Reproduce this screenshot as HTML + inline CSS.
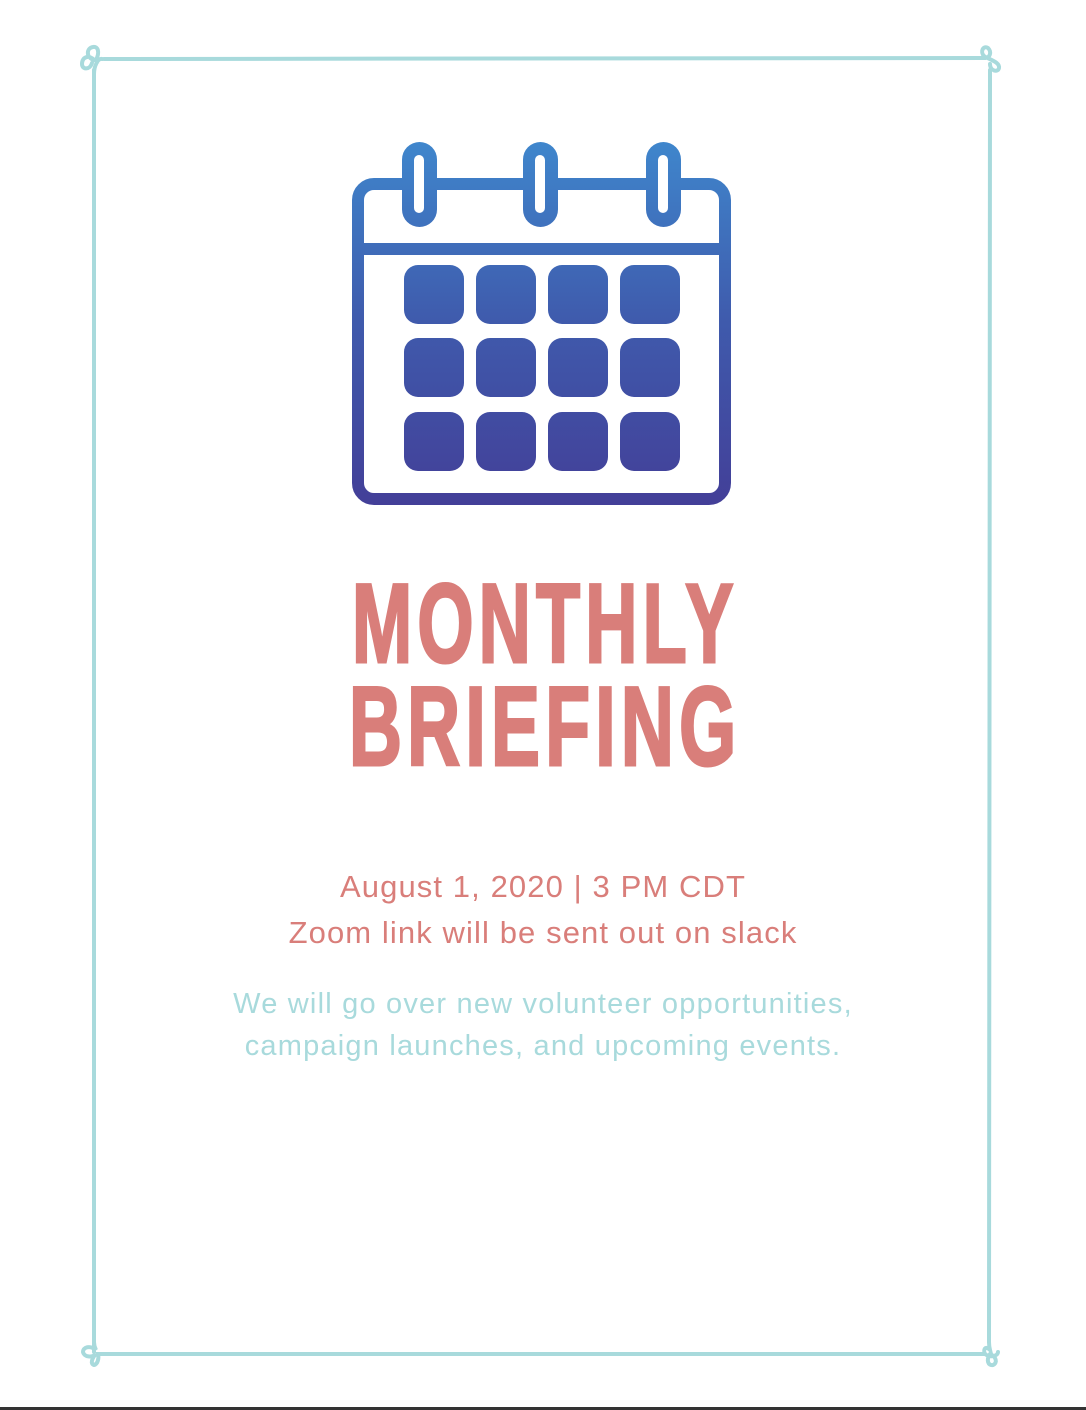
<!DOCTYPE html>
<html><head><meta charset="utf-8"><style>
html,body{margin:0;padding:0;background:#fff;}
body{width:1086px;height:1410px;position:relative;overflow:hidden;font-family:"Liberation Sans",sans-serif;}
.t{position:absolute;left:0;width:1086px;text-align:center;white-space:nowrap;}
.h{font-weight:bold;color:#d97e7a;font-size:112px;line-height:1;-webkit-text-stroke:3px #d97e7a;letter-spacing:8px;}
.h span{display:inline-block;padding-left:8px;}
</style></head><body>
<svg width="1086" height="1410" style="position:absolute;left:0;top:0">
<defs><linearGradient id="g" gradientUnits="userSpaceOnUse" x1="0" y1="142" x2="0" y2="505">
<stop offset="0" stop-color="#3f86cc"/><stop offset="0.5" stop-color="#3f5aac"/><stop offset="1" stop-color="#433f98"/></linearGradient></defs>
<g fill="none" stroke="#a8dadc" stroke-width="4" stroke-linecap="round">
<path d="M94 1352 L94 70 M104 59 L985 58 M990 70 L989 1342 M985 1354 L100 1354"/>
<path d="M94 74 C94 66 98 58 102 59 M96 60 C100 52 98 46 93 47 C86 48 86 58 94 60 C90 55 82 56 82 64 C82 70 90 70 92 63"/>
<path d="M985 58 C990 58 992 52 988 48 C983 45 980 52 984 56 C990 60 1000 62 999 68 C998 73 990 71 990 64"/>
<path d="M94 1342 C94 1346 96 1350 96 1350 C90 1345 83 1347 83 1352 C84 1357 92 1358 96 1354 C92 1358 90 1364 94 1365 C98 1364 99 1358 98 1354 L104 1354"/>
<path d="M989 1342 C989 1346 990 1350 990 1350 C985 1345 983 1350 985 1354 C990 1358 998 1356 998 1352 M990 1354 C986 1360 988 1366 993 1365 C998 1363 996 1356 990 1354"/>
</g>
<g fill="url(#g)">
<rect x="358" y="184" width="367" height="315" rx="16" fill="none" stroke="url(#g)" stroke-width="12"/>
<rect x="358" y="243" width="367" height="12"/>
<rect x="402" y="142" width="35" height="85" rx="17.5"/>
<rect x="523" y="142" width="35" height="85" rx="17.5"/>
<rect x="646" y="142" width="35" height="85" rx="17.5"/>
<rect x="404" y="265" width="60" height="59" rx="14"/><rect x="476" y="265" width="60" height="59" rx="14"/><rect x="548" y="265" width="60" height="59" rx="14"/><rect x="620" y="265" width="60" height="59" rx="14"/>
<rect x="404" y="338" width="60" height="59" rx="14"/><rect x="476" y="338" width="60" height="59" rx="14"/><rect x="548" y="338" width="60" height="59" rx="14"/><rect x="620" y="338" width="60" height="59" rx="14"/>
<rect x="404" y="412" width="60" height="59" rx="14"/><rect x="476" y="412" width="60" height="59" rx="14"/><rect x="548" y="412" width="60" height="59" rx="14"/><rect x="620" y="412" width="60" height="59" rx="14"/>
</g>
<g fill="#fff"><rect x="414" y="155" width="10" height="58" rx="5"/><rect x="535" y="155" width="10" height="58" rx="5"/><rect x="658" y="155" width="10" height="58" rx="5"/></g>
<rect x="0" y="1407" width="1086" height="3" fill="#333"/>
</svg>
<div class="t h" style="top:568px"><span style="transform:scaleX(0.645)">MONTHLY</span></div>
<div class="t h" style="top:671px"><span style="transform:scaleX(0.655)">BRIEFING</span></div>
<div class="t" style="top:864px;font-size:31px;letter-spacing:1.1px;color:#d97e7a;line-height:46px">August 1, 2020 | 3 PM CDT<br>Zoom link will be sent out on slack</div>
<div class="t" style="top:983px;font-size:29px;letter-spacing:1.2px;color:#a8dadc;line-height:42px">We will go over new volunteer opportunities,<br>campaign launches, and upcoming events.</div>
</body></html>
